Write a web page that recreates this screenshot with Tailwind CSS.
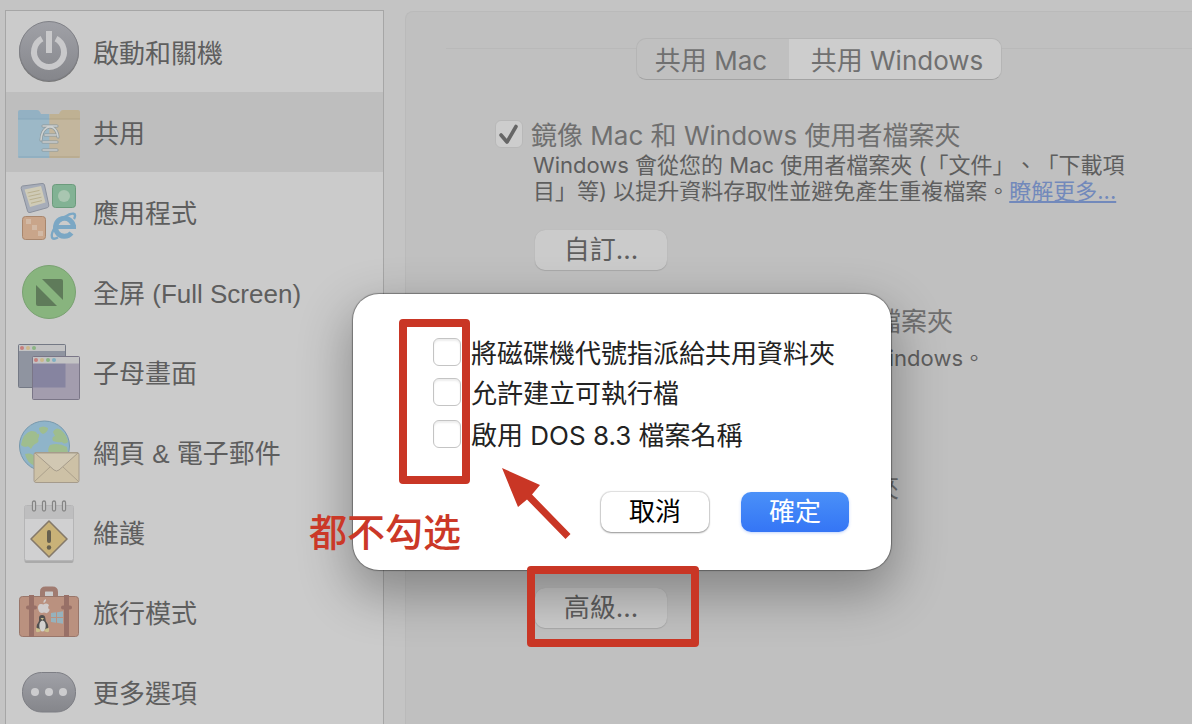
<!DOCTYPE html>
<html lang="zh-Hant">
<head>
    <meta charset="UTF-8">
    <meta name="viewport" content="width=device-width, initial-scale=1.0">
    <title>共用</title>
    <script src="https://cdn.jsdelivr.net/npm/@tailwindcss/browser@4"></script>
</head>
<body class="relative h-screen overflow-hidden bg-[#c4c4c4] font-[Inter,'Noto_Sans_CJK_TC',sans-serif] text-[26px] leading-8 text-[#5e5e5e] [text-spacing-trim:space-all]">

    <div class="flex h-full pt-[10px] pl-[5px]">

        <!-- Sidebar -->
        <nav class="w-[379px] shrink-0 overflow-hidden border border-b-0 border-[#a6a6a6] bg-[#cbcbcb] pt-px font-['Liberation_Sans','Noto_Sans_CJK_TC',sans-serif]">
            <a href="#" class="flex h-20 items-center gap-3 pl-[11px]">
                <svg class="size-16 shrink-0" viewBox="0 0 64 64">
                    <defs><linearGradient id="gray" x1="0" y1="0" x2="0" y2="1"><stop offset="0" stop-color="#a0a1a7"/><stop offset="1" stop-color="#85868b"/></linearGradient></defs>
                    <circle cx="32" cy="32" r="30" fill="#777"/>
                    <circle cx="32" cy="31" r="29.5" fill="url(#gray)" stroke="#808187"/>
                    <path d="M25 18.7a15 15 0 1 0 14 0" fill="none" stroke="#c9c9cb" stroke-width="6"/>
                    <path d="M29 11h6v22h-6z" fill="#c9c9cb"/>
                </svg>
                <span class="pt-[3px]">啟動和關機</span>
            </a>
            <a href="#" aria-current="page" class="flex h-20 items-center gap-3 bg-[#bebebe] pl-[11px]">
                <svg class="size-16 shrink-0" viewBox="0 0 64 64">
                    <path d="M1 12q0-2 2-2h17q2 0 3 2l1 2h8.500v44H3q-2 0-2-2z" fill="#93b1c3"/>
                    <path d="M63 12q0-2-2-2H46q-2 0-3 2l-1 2h-9.500v44H61q2 0 2-2z" fill="#bfb193"/>
                    <path d="M1 19h31.500v39H3q-2 0-2-2z" fill="#9cb8c7"/>
                    <path d="M32.500 19H63v37q0 2-2 2H32.500z" fill="#c3b69d"/>
                    <path d="M1 19h31.500M1.500 57h31" stroke="#86a7bb"/>
                    <path d="M32.500 19H63M32.500 57h30" stroke="#b1a385"/>
                    <g fill="none" stroke="#8b979b" stroke-width="3" stroke-linecap="round"><path d="M26 26h14M24 40q.5-9 5.500-12 3.500-2 7 0 4 3 4.500 9M28 35h11M26 42h14M26 50h14"/></g>
                    <g fill="none" stroke="#cdd0cf" stroke-width="1.600" stroke-linecap="round"><path d="M26 26h14M24 40q.5-9 5.500-12 3.500-2 7 0 4 3 4.500 9M28 35h11M26 42h14M26 50h14"/></g>
                </svg>
                <span class="pt-[3px]">共用</span>
            </a>
            <a href="#" class="flex h-20 items-center gap-3 pl-[11px]">
                <svg class="size-16 shrink-0" viewBox="0 0 64 64">
                    <path d="M5.500 6 25 3.500q2-.3 2.500 1.500l4.300 20q.4 2-1.500 2.700L13 32.500q-2 .5-2.500-1.500L4.200 8.500Q4 6.300 5.500 6z" fill="#a7adb9" stroke="#8b919d"/>
                    <path d="m7.500 9.500 16.500-3.500 4.500 16.500-15.500 4.500z" fill="#cfcbb7"/>
                    <path d="m10.500 13 12-2.600m-11 6 12-2.600m-11 6 12-2.600m-10.500 6 11-2.600" stroke="#b9b08f" stroke-width="1"/>
                    <rect x="35.500" y="4.500" width="23" height="23" rx="3" fill="#82b294" stroke="#6b9b7c"/>
                    <circle cx="47" cy="16" r="6" fill="#a9c6b1"/>
                    <rect x="5.500" y="36.500" width="23" height="23" rx="3" fill="#c9a58a" stroke="#a8866d"/>
                    <path d="M9 39h5v5H9zM15 45h5v5h-5zM21 51h5v5h-5z" fill="#d2b9a5"/>
                    <g fill="none" stroke="#7ba7c4">
                        <path d="M56.500 47.500a9 9 0 1 0-2 5.500" stroke-width="5"/>
                        <path d="M40 47h19" stroke-width="4"/>
                        <path d="M41 57.500q-5 2.500-6 0-1.500-4 4-11.500 6-8.500 13-11.500 6-2 6 .8.300 1.700-1 3.700" stroke-width="2.400"/>
                    </g>
                </svg>
                <span class="pt-[3px]">應用程式</span>
            </a>
            <a href="#" class="flex h-20 items-center gap-3 pl-[11px]">
                <svg class="size-16 shrink-0" viewBox="0 0 64 64">
                    <circle cx="32" cy="32" r="26.500" fill="#88b47e" stroke="#79a171"/>
                    <path d="M25 19h19q2 0 2 2v19z" fill="#5f7b5a"/>
                    <path d="M19 25v19q0 2 2 2h19z" fill="#5f7b5a"/>
                </svg>
                <span class="pt-[3px]">全屏 (Full Screen)</span>
            </a>
            <a href="#" class="flex h-20 items-center gap-3 pl-[11px]">
                <svg class="size-16 shrink-0" viewBox="0 0 64 64">
                    <rect x="1.500" y="4.500" width="47" height="43" rx="1" fill="#8f94a0" stroke="#747985"/>
                    <path d="M2 5h46v6H2z" fill="#c3c3c4"/>
                    <circle cx="5" cy="8" r="2" fill="#c77f7c"/><circle cx="11" cy="8" r="2" fill="#cdb78a"/><circle cx="17" cy="8" r="2" fill="#8ab583"/>
                    <rect x="15.500" y="16.500" width="47" height="43" rx="1" fill="#a39dae" stroke="#7a7687"/>
                    <path d="M16 17h32.500v30.500H16z" fill="#8684a0"/>
                    <path d="M16 17h46v6.500H16z" fill="#c3c3c4"/>
                    <circle cx="19" cy="20" r="2" fill="#c77f7c"/><circle cx="25" cy="20" r="2" fill="#cdb78a"/><circle cx="31" cy="20" r="2" fill="#8ab583"/><circle cx="37" cy="20" r="2" fill="#7fb0c2"/>
                </svg>
                <span class="pt-[3px]">子母畫面</span>
            </a>
            <a href="#" class="flex h-20 items-center gap-3 pl-[11px]">
                <svg class="size-16 shrink-0" viewBox="0 0 64 64">
                    <circle cx="27.500" cy="26" r="25" fill="#8fb4c9" stroke="#7799ad"/>
                    <path d="M4 25q2-12 10-14 6 0 6 3 4-1 1 5 2 3-3 5-3 2-4 5-3-4-5-2-3 0-5-2zM22 8q4-3 9 0 0 4-5 6-4-2-4-6zM36 12q3-6 8-2 6 5 7 12-4 3-6 0-4 1-9-1-2-4 2-5zM33 25q8-3 17 2l1 6H32q-2-4 1-8zM8 34q8-2 10 4v8q-8-3-10-12z" fill="#9fbd8e"/>
                    <rect x="17" y="32.500" width="45" height="30" rx="2" fill="#cdc1a6" stroke="#a59b8c"/>
                    <path d="m18 61 15-14M61 61 46 47" stroke="#aca18c"/>
                    <path d="m18 33 19 17q2.500 2 5 0l19-17z" fill="#d1c8b3" stroke="#a69c8b"/>
                </svg>
                <span class="pt-[3px]">網頁 &amp; 電子郵件</span>
            </a>
            <a href="#" class="flex h-20 items-center gap-3 pl-[11px]">
                <svg class="size-16 shrink-0" viewBox="0 0 64 64">
                    <rect x="7.500" y="6" width="49" height="57" rx="2" fill="#aaa"/>
                    <rect x="7.500" y="5.500" width="49" height="55" rx="2" fill="#d0d0d1" stroke="#b5b5b6"/>
                    <path d="M8 6h48v13H8z" fill="#bebebf"/>
                    <g fill="#cfcfcf" stroke="#858585" stroke-width="1.300"><rect x="15.500" y="1" width="3" height="10" rx="1.500"/><rect x="25.500" y="1" width="3" height="10" rx="1.500"/><rect x="35.500" y="1" width="3" height="10" rx="1.500"/><rect x="45.500" y="1" width="3" height="10" rx="1.500"/></g>
                    <path d="m32 21 18 18-18 18-18-18z" fill="#c9b278" stroke="#84796a" stroke-width="1.600" stroke-linejoin="round"/>
                    <path d="M32 32v9" stroke="#66604f" stroke-width="4" stroke-linecap="round"/><circle cx="32" cy="47.500" r="2.200" fill="#66604f"/>
                </svg>
                <span class="pt-[3px]">維護</span>
            </a>
            <a href="#" class="flex h-20 items-center gap-3 pl-[11px]">
                <svg class="size-16 shrink-0" viewBox="0 0 64 64">
                    <path d="M25.500 17v-5q0-3 3-3h7q3 0 3 3v5" fill="none" stroke="#a07b70" stroke-width="5"/>
                    <rect x="2.500" y="16.500" width="59" height="40" rx="3" fill="#ba917f" stroke="#99766a"/>
                    <path d="M12 15h5v42h-5zM47 15h5v42h-5z" fill="#987067"/>
                    <path d="M11 27.500h7M46 27.500h7" stroke="#987067" stroke-width="4" stroke-linecap="round"/>
                    <path d="M26.500 23q-.5-3 2.500-4 .3 3-2.500 4zM26.500 24.500q2-1.500 4.500-.5l1 1.200q-2 2.800.8 4.600-1.800 4-3.800 3.200-2-.8-4 0-3 0-4-4.500-.3-5 3.500-4.500z" fill="#d0cccb"/>
                    <path d="M34 33l5-.7V37h-5zM40 32.200l6-.9V37h-6zM34 38h5v4.700l-5-.7zM40 38h6v5.700l-6-.9z" fill="#96b2bd"/>
                    <path d="M22 38q0-3 3-3t3.300 3q0 3 1.800 5 2 3 .5 7H20.500q-2-4 .5-7 1.500-2 1-5z" fill="#51504f"/>
                    <ellipse cx="25.500" cy="46" rx="3.200" ry="5.500" fill="#d3d1cf"/>
                    <path d="M23.500 38h3.500l-1.700 2zM19 48q4 0 5 3-3 2-5 .5zM32 48q-4 0-5 3 3 2 5 .5z" fill="#cbbf8d"/>
                </svg>
                <span class="pt-[3px]">旅行模式</span>
            </a>
            <a href="#" class="flex h-20 items-center gap-3 pl-[11px]">
                <svg class="size-16 shrink-0" viewBox="0 0 64 64">
                    <rect x="5.500" y="12.500" width="53" height="39.500" rx="19" fill="url(#gray)" stroke="#7d7e84"/>
                    <g fill="#ccccce"><circle cx="18" cy="32" r="4"/><circle cx="32" cy="32" r="4"/><circle cx="46" cy="32" r="4"/></g>
                </svg>
                <span class="pt-[3px]">更多選項</span>
            </a>
        </nav>

        <!-- Sharing panel -->
        <main class="ml-[21px] mt-px flex-1 rounded-tl-lg border border-r-0 border-b-0 border-[#bababa] bg-[#c0c0c0] pl-10">
            <div class="mt-[26px] flex items-start">
                <div class="mt-[10px] flex-1 border-t border-[#b9b9b9]"></div>
                <div class="flex h-[42px] overflow-hidden rounded-[10px] border border-[#b5b5b5] border-b-[#a3a3a3] text-[#707070]">
                    <button type="button" class="w-[152px] pt-[3px] pr-1">共用 Mac</button>
                    <button type="button" class="w-[212px] bg-[#cdcdcd] pt-[3px] pl-1">共用 Windows</button>
                </div>
                <div class="mt-[10px] flex-1 border-t border-[#b9b9b9]"></div>
            </div>

            <div class="pt-[38px] pl-[49px]">
                <div class="flex items-center gap-2 text-[#6f6f6f]">
                    <span class="relative flex size-7 items-center justify-center">
                        <input id="mirror" type="checkbox" checked class="peer size-7 appearance-none rounded-md border border-[#b8b8b8] bg-[#cdcdcd]">
                        <svg class="pointer-events-none absolute size-7" viewBox="0 0 28 28"><path d="m6 15 6 7L21 6.500" fill="none" stroke="#666" stroke-width="3.600" stroke-linecap="round" stroke-linejoin="round"/></svg>
                    </span>
                    <label for="mirror" class="pt-1 leading-7">鏡像 Mac 和 Windows 使用者檔案夾</label>
                </div>
                <div class="pl-[38px]">
                    <p class="mt-0.5 whitespace-nowrap text-[22px] leading-[26px]">Windows 會從您的 Mac 使用者檔案夾 (「文件」、「下載項<br>目」等) 以提升資料存取性並避免產生重複檔案。<a href="#" class="text-[#7289bb] underline">瞭解更多...</a></p>
                    <button type="button" class="mt-[26px] ml-0.5 block h-10 w-[132px] rounded-[10px] bg-[#cbcbcb] shadow-[0_1px_1px_#a8a8a8,0_0_1px_#a8a8a8]">自訂...</button>
                    <p class="mt-9 w-[420px] text-right text-[#6f6f6f]">檔案夾</p>
                    <p class="mt-[7px] w-[452px] text-right text-[22px] leading-[26px]">Windows。</p>
                    <p class="mt-[101px] w-[366px] text-right text-[#6f6f6f]">夾</p>
                    <button type="button" class="mt-[84px] ml-0.5 block h-10 w-[132px] rounded-[10px] bg-[#cbcbcb] shadow-[0_1px_1px_#a8a8a8,0_0_1px_#a8a8a8]">高級...</button>
                </div>
            </div>
        </main>
    </div>

    <!-- Advanced options dialog -->
    <form role="dialog" class="absolute top-[294px] left-[353px] w-[538px] rounded-[26px] bg-white pt-[42px] pr-[42px] pb-[38px] pl-20 text-[#222] shadow-[0_0_1px_1px_rgba(0,0,0,0.35),0_20px_50px_5px_rgba(0,0,0,0.3)]">
        <div class="flex items-center gap-[10px]">
            <input id="drive" type="checkbox" class="size-7 appearance-none rounded-md border border-[#c4c4c4] bg-white shadow-[inset_0_2px_2px_#eee]">
            <label for="drive" class="pt-1 leading-7">將磁碟機代號指派給共用資料夾</label>
        </div>
        <div class="mt-2 flex items-center gap-[10px]">
            <input id="exec" type="checkbox" class="size-7 appearance-none rounded-md border border-[#c4c4c4] bg-white shadow-[inset_0_2px_2px_#eee]">
            <label for="exec" class="pt-1 leading-7">允許建立可執行檔</label>
        </div>
        <div class="mt-[10px] flex items-center gap-[10px]">
            <input id="dos" type="checkbox" class="size-7 appearance-none rounded-md border border-[#c4c4c4] bg-white shadow-[inset_0_2px_2px_#eee]">
            <label for="dos" class="pt-1 leading-7">啟用 DOS 8.3 檔案名稱</label>
        </div>
        <div class="mt-[42px] flex justify-end gap-8">
            <button type="button" class="h-10 w-[108px] rounded-[10px] bg-white text-black shadow-[0_1px_2px_rgba(0,0,0,0.35),0_0_1px_1px_rgba(0,0,0,0.12)]">取消</button>
            <button type="submit" class="h-10 w-[108px] rounded-[10px] bg-linear-to-b from-[#4a90f8] to-[#3575f5] text-white shadow-[0_1px_3px_rgba(53,117,245,0.3)]">確定</button>
        </div>
    </form>

    <!-- Annotations -->
    <div class="pointer-events-none absolute top-[319px] left-[399px] h-[165px] w-[71px] rounded border-8 border-[#c93625]"></div>
    <div class="pointer-events-none absolute top-[566px] left-[527px] h-[81px] w-[172px] rounded border-8 border-[#c93625]"></div>
    <svg class="pointer-events-none absolute top-[468px] left-[502px] h-[72px] w-[70px]" viewBox="0 0 70 72">
        <path d="M0 0 38 17 30 26.500 68.500 66 63.500 71 25 31.500 16 39z" fill="#c93625"/>
    </svg>
    <p class="pointer-events-none absolute top-[508px] left-[309px] text-[38px] leading-[48px] font-medium text-[#cb3827]">都不勾选</p>

</body>
</html>
